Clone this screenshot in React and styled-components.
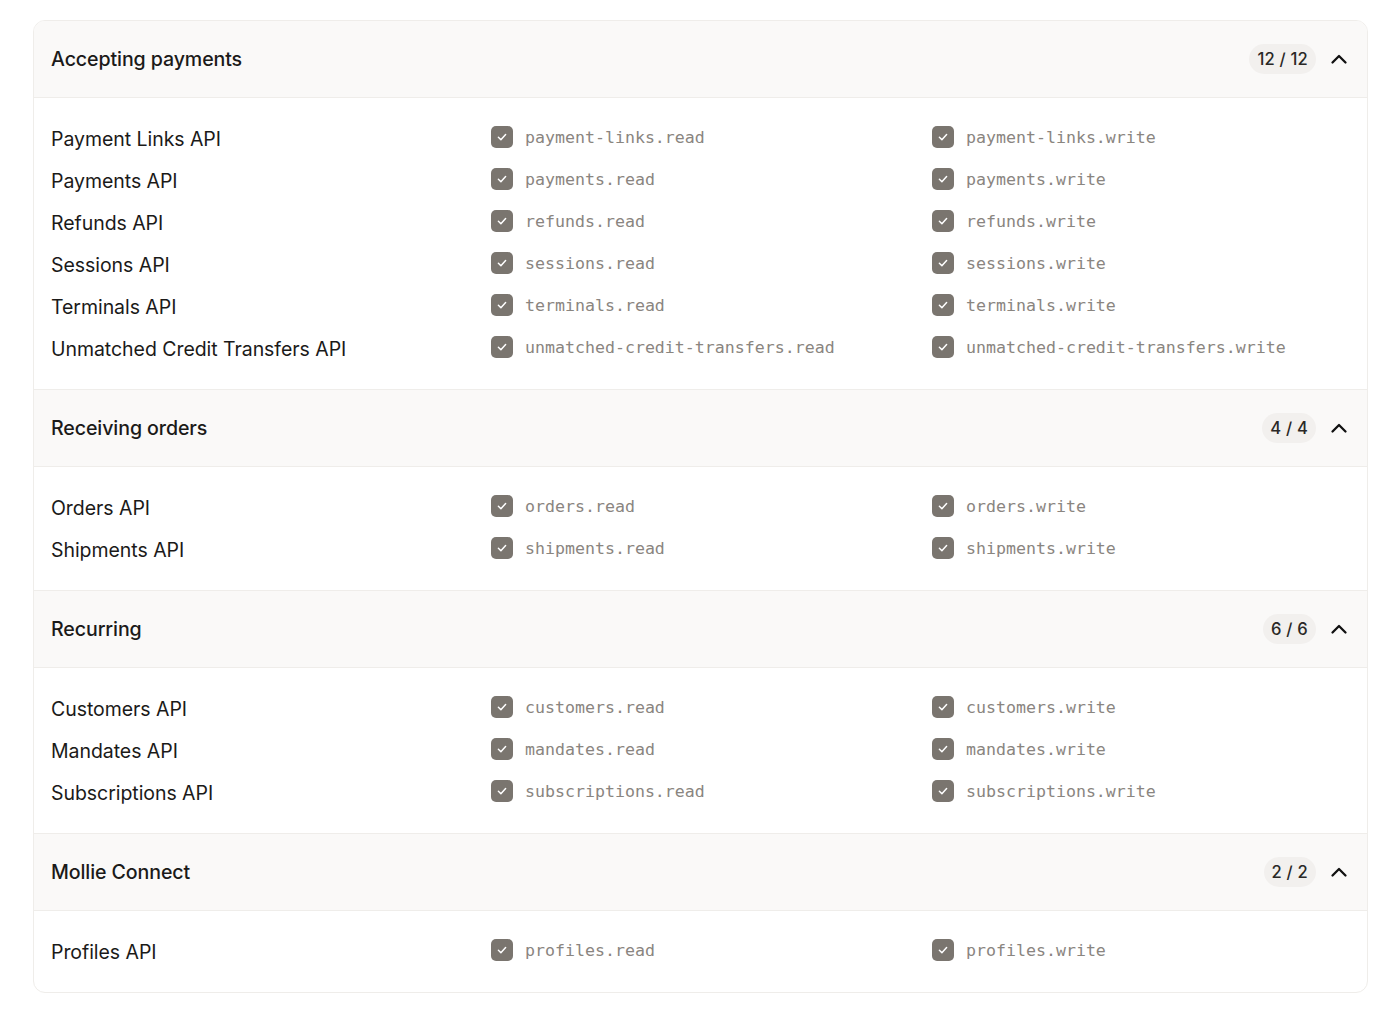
import React from "react";
import styled, { createGlobalStyle } from "styled-components";

const Global = createGlobalStyle`
  html, body { margin: 0; padding: 0; background: #ffffff; }
  body { font-family: Inter, "Noto Sans", sans-serif; color: #1b1a19; }
`;

const Page = styled.div`
  padding: 20px 32px 20px 33px;
`;

const Card = styled.div`
  border: 1px solid #efedea;
  border-radius: 12px;
  overflow: hidden;
  background: #ffffff;
`;

const Section = styled.section`
  & + & { border-top: 1px solid #efedea; }
`;

const Header = styled.div`
  box-sizing: border-box;
  height: 77px;
  display: flex;
  align-items: center;
  padding: 0 18px 0 17px;
  background: #faf9f8;
  border-bottom: 1px solid #efedea;
`;

const Title = styled.h3`
  margin: 0;
  flex: 1;
  font-size: 19.6px;
  font-weight: 500;
  letter-spacing: -0.1px;
`;

const Count = styled.span`
  display: inline-flex;
  align-items: center;
  height: 30px;
  padding: 0 8px;
  border-radius: 15px;
  background: #f2f0ee;
  font-size: 16.6px;
  font-weight: 500;
  color: #2a2826;
  letter-spacing: 0.2px;
`;

const Toggle = styled.span`
  display: inline-flex;
  width: 20px;
  height: 20px;
  margin-left: 13px;
  align-items: center;
  justify-content: center;
`;

const Body = styled.div`
  padding: 20px 17px 19px;
`;

const Row = styled.div`
  display: grid;
  grid-template-columns: 440px 441px 1fr;
  height: 42px;
  align-items: center;
`;

const Name = styled.span`
  font-size: 19.5px;
  font-weight: 400;
  letter-spacing: -0.05px;
`;

const Scope = styled.label`
  display: flex;
  align-items: center;
  gap: 12px;
  margin-top: -4px;
`;

const Box = styled.span`
  width: 22px;
  height: 22px;
  border-radius: 5px;
  background: #7a756f;
  display: inline-flex;
  align-items: center;
  justify-content: center;
  flex: none;
`;

const Code = styled.code`
  font-family: "DejaVu Sans Mono", "Liberation Mono", monospace;
  font-size: 16.6px;
  color: #8a8580;
`;

const Check = () => (
  <svg width="12" height="12" viewBox="0 0 12 12" fill="none">
    <path d="M2.4 6.3 L4.9 8.7 L9.6 3.5" stroke="#fff" strokeWidth="1.5" strokeLinecap="round" strokeLinejoin="round" />
  </svg>
);

const Chevron = () => (
  <svg width="18" height="12" viewBox="0 0 18 12" fill="none">
    <path d="M2.5 9.5 L9 3 L15.5 9.5" stroke="#111" strokeWidth="2.3" strokeLinecap="round" strokeLinejoin="round" />
  </svg>
);

const groups = [
  {
    title: "Accepting payments",
    items: [
      ["Payment Links API", "payment-links"],
      ["Payments API", "payments"],
      ["Refunds API", "refunds"],
      ["Sessions API", "sessions"],
      ["Terminals API", "terminals"],
      ["Unmatched Credit Transfers API", "unmatched-credit-transfers"],
    ],
  },
  {
    title: "Receiving orders",
    items: [
      ["Orders API", "orders"],
      ["Shipments API", "shipments"],
    ],
  },
  {
    title: "Recurring",
    items: [
      ["Customers API", "customers"],
      ["Mandates API", "mandates"],
      ["Subscriptions API", "subscriptions"],
    ],
  },
  {
    title: "Mollie Connect",
    items: [["Profiles API", "profiles"]],
  },
];

const ScopeItem = ({ code }) => (
  <Scope>
    <Box><Check /></Box>
    <Code>{code}</Code>
  </Scope>
);

export default function App() {
  return (
    <Page>
      <Global />
      <Card>
        {groups.map((g) => {
          const n = g.items.length * 2;
          return (
            <Section key={g.title}>
              <Header>
                <Title>{g.title}</Title>
                <Count>{n} / {n}</Count>
                <Toggle><Chevron /></Toggle>
              </Header>
              <Body>
                {g.items.map(([name, key]) => (
                  <Row key={key}>
                    <Name>{name}</Name>
                    <ScopeItem code={`${key}.read`} />
                    <ScopeItem code={`${key}.write`} />
                  </Row>
                ))}
              </Body>
            </Section>
          );
        })}
      </Card>
    </Page>
  );
}
